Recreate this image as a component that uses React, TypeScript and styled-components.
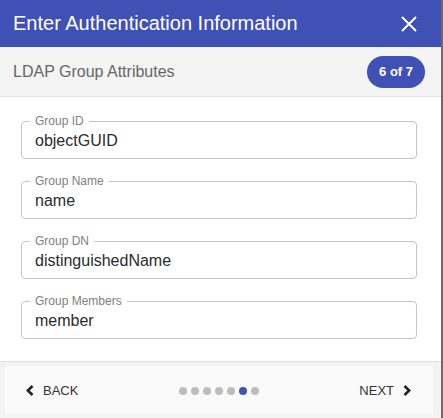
import styled, { createGlobalStyle } from "styled-components";

const GlobalStyle = createGlobalStyle`
  html, body {
    margin: 0;
    padding: 0;
    background: #6b6b6b;
  }
  body {
    font-family: "Liberation Sans", Arial, sans-serif;
  }
`;

const Dialog = styled.div`
  width: 441px;
  height: 418px;
  background: #fff;
  display: flex;
  flex-direction: column;
  overflow: hidden;
`;

const Header = styled.header`
  height: 47px;
  flex: none;
  background-color: #3f51b5;
  padding: 0 20px 0 13px;
  display: flex;
  justify-content: space-between;
  align-items: center;
`;

const Title = styled.h1`
  margin: 0;
  color: #fff;
  font-size: 20px;
  font-weight: 400;
`;

const CloseButton = styled.button`
  width: 24px;
  height: 24px;
  padding: 0;
  border: 0;
  background: none;
  display: flex;
  align-items: center;
  justify-content: center;
  cursor: pointer;
`;

const SubHeader = styled.div`
  height: 49px;
  flex: none;
  background-color: #f4f4f4;
  border-bottom: 1px solid #e0e0e0;
  padding: 0 16px 0 13px;
  display: flex;
  justify-content: space-between;
  align-items: center;
`;

const StepName = styled.span`
  color: #666;
  font-size: 16px;
`;

const Badge = styled.span`
  height: 32px;
  padding: 0 12px;
  border-radius: 16px;
  background-color: #3f51b5;
  color: #fff;
  font-size: 13px;
  font-weight: 700;
  display: flex;
  align-items: center;
`;

const Body = styled.div`
  flex: 1;
  padding: 17px 24px 0 21px;
  display: flex;
  flex-direction: column;
  gap: 15px;
`;

const Field = styled.fieldset`
  margin: 0;
  padding: 0 13px;
  border: 1px solid #c4c4c4;
  border-radius: 4px;
  min-width: 0;
`;

const Legend = styled.legend`
  margin-left: -5px;
  padding: 0 5px;
  font-size: 12px;
  line-height: 14px;
  color: #808080;
`;

const Input = styled.input`
  display: block;
  width: 100%;
  height: 24px;
  margin: 1px 0 5px;
  padding: 0;
  border: 0;
  outline: none;
  background: transparent;
  font-family: "Liberation Sans", Arial, sans-serif;
  font-size: 16px;
  color: #2b2b2b;
`;

const Footer = styled.footer`
  flex: none;
  border-top: 1px solid #e0e0e0;
  background-color: #f3f3f3;
  padding: 4px 8px 4px 5px;
`;

const FooterBar = styled.div`
  height: 48px;
  background-color: #fafafa;
  padding: 0 22px 0 21px;
  display: grid;
  grid-template-columns: 1fr auto 1fr;
  align-items: center;
`;

const NavButton = styled.button<{ $align: "start" | "end" }>`
  justify-self: ${(p) => p.$align};
  padding: 0;
  border: 0;
  background: none;
  display: flex;
  align-items: center;
  gap: 9px;
  font-family: "Liberation Sans", Arial, sans-serif;
  font-size: 13px;
  color: #333;
  cursor: pointer;
`;

const Dots = styled.div`
  display: flex;
  gap: 4px;
  margin-top: 2px;
`;

const Dot = styled.span<{ $active?: boolean }>`
  width: 8px;
  height: 8px;
  border-radius: 50%;
  background-color: ${(p) => (p.$active ? "#3f51b5" : "#bdbdbd")};
`;

const fields = [
  { label: "Group ID", value: "objectGUID" },
  { label: "Group Name", value: "name" },
  { label: "Group DN", value: "distinguishedName" },
  { label: "Group Members", value: "member" },
];

const Chevron = ({ dir }: { dir: "left" | "right" }) => (
  <svg width="8" height="11" viewBox="0 0 8 11">
    <polyline
      points={dir === "left" ? "6.5,1 1.8,5.5 6.5,10" : "1.5,1 6.2,5.5 1.5,10"}
      fill="none"
      stroke="#222"
      strokeWidth="2.6"
    />
  </svg>
);

export default function App() {
  const step = 6;
  const total = 7;

  return (
    <>
      <GlobalStyle />
      <Dialog>
        <Header>
          <Title>Enter Authentication Information</Title>
          <CloseButton aria-label="close">
            <svg width="16" height="16" viewBox="0 0 16 16">
              <path d="M1 1 L15 15 M15 1 L1 15" stroke="#fff" strokeWidth="2" />
            </svg>
          </CloseButton>
        </Header>
        <SubHeader>
          <StepName>LDAP Group Attributes</StepName>
          <Badge>
            {step} of {total}
          </Badge>
        </SubHeader>
        <Body>
          {fields.map((f) => (
            <Field key={f.label}>
              <Legend>{f.label}</Legend>
              <Input defaultValue={f.value} />
            </Field>
          ))}
        </Body>
        <Footer>
          <FooterBar>
            <NavButton $align="start">
              <Chevron dir="left" />
              BACK
            </NavButton>
            <Dots>
              {Array.from({ length: total }, (_, i) => (
                <Dot key={i} $active={i + 1 === step} />
              ))}
            </Dots>
            <NavButton $align="end">
              NEXT
              <Chevron dir="right" />
            </NavButton>
          </FooterBar>
        </Footer>
      </Dialog>
    </>
  );
}
